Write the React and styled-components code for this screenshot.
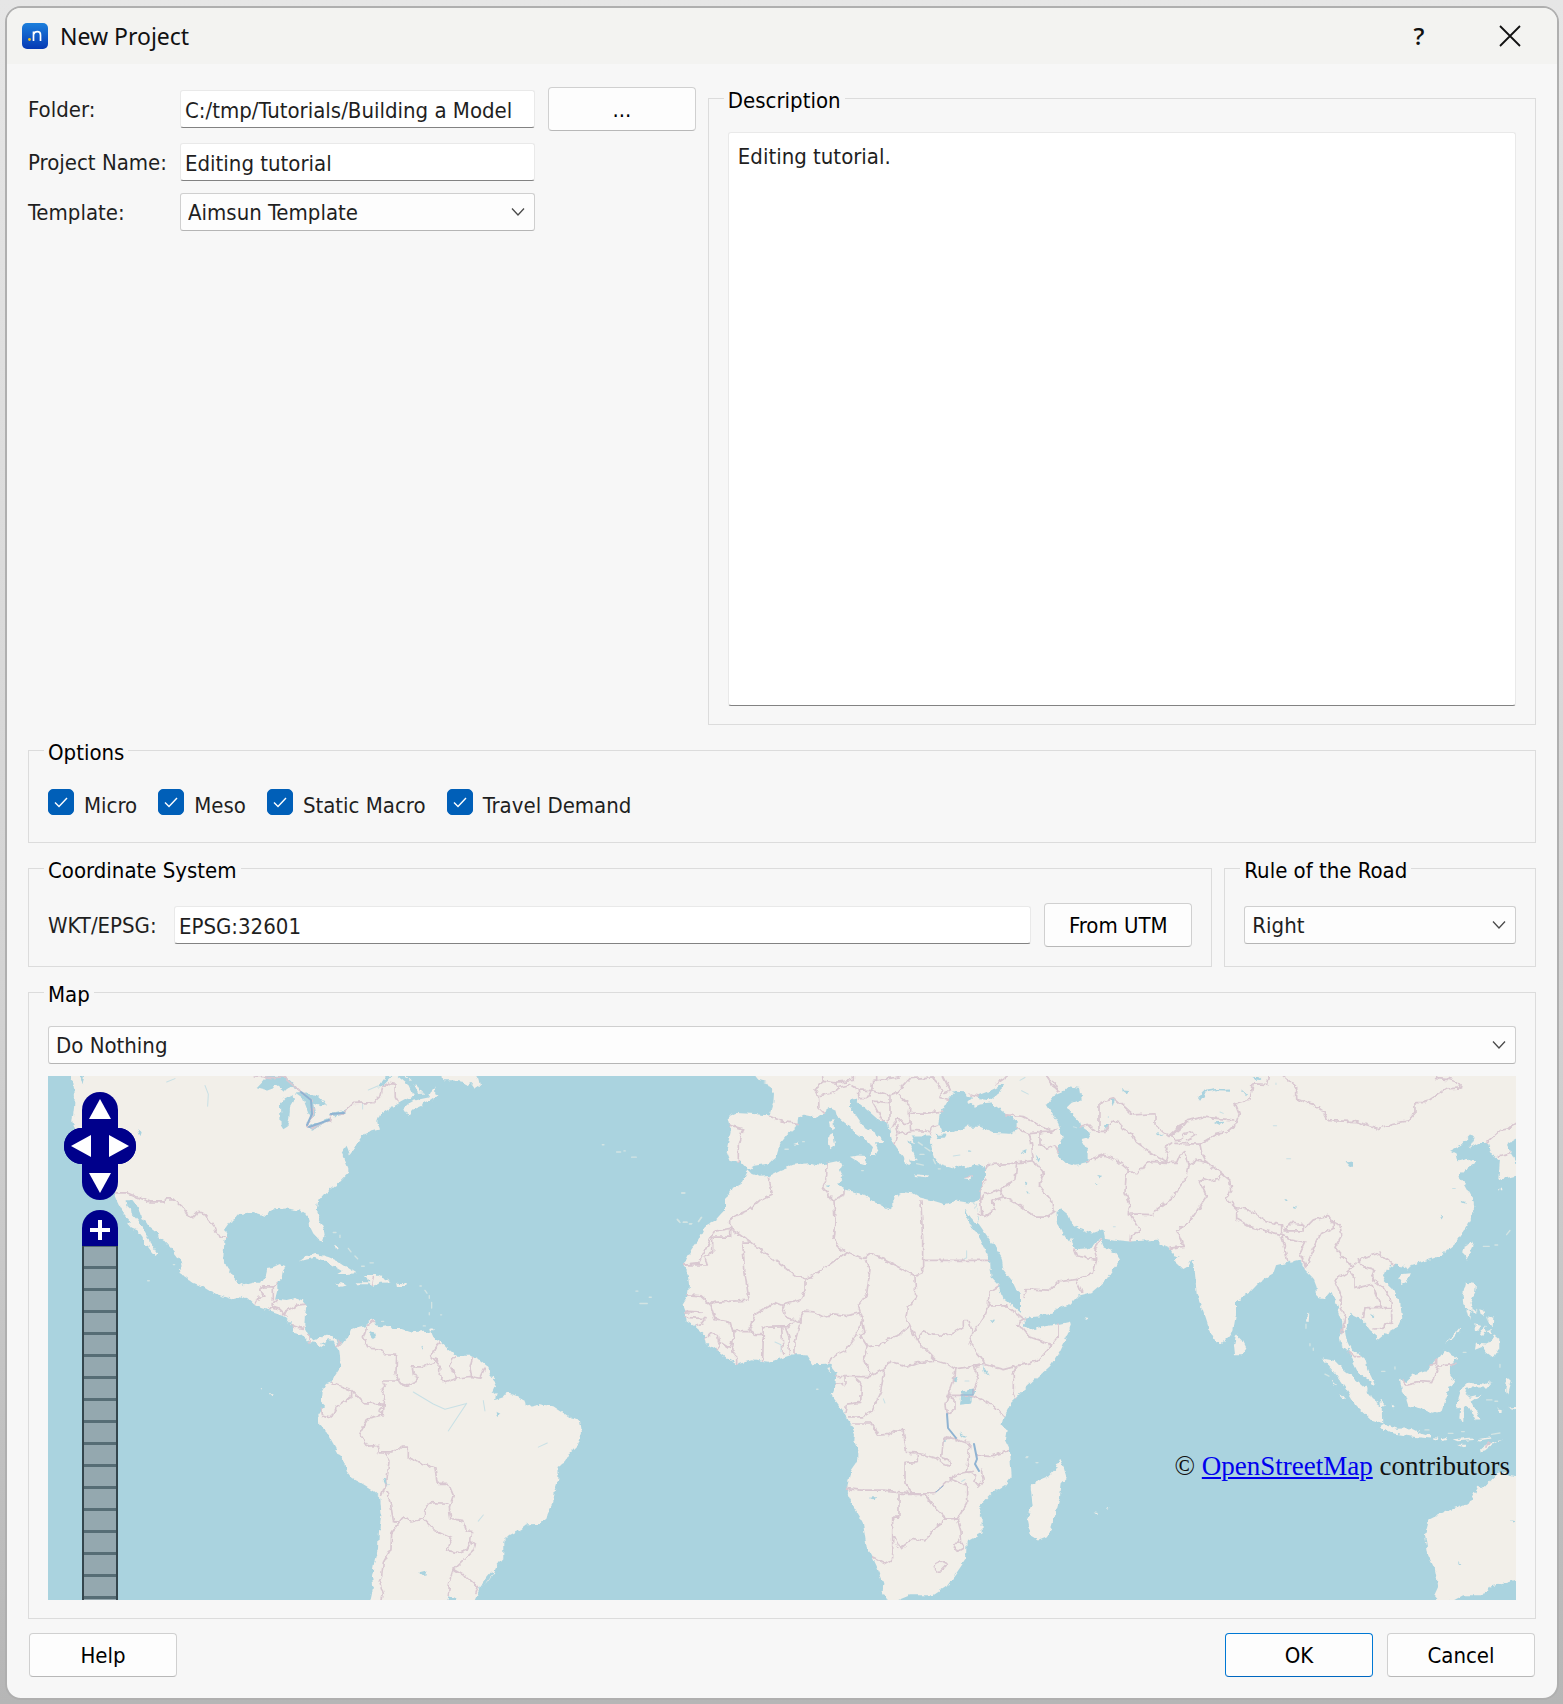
import React from "react";
import styled, { createGlobalStyle, css } from "styled-components";

const GlobalStyle = createGlobalStyle`
  * { box-sizing: border-box; }
  body {
    margin: 0;
    background: linear-gradient(#e6e6e6, #d2d2d2 60%, #b6b6b6);
    color: #1f1f1f;
    font-family: "DejaVu Sans Condensed", "Noto Sans", sans-serif;
    font-size: 22px;
    line-height: 28px;
  }
  button, input, select, textarea { font: inherit; color: inherit; margin: 0; }
`;

const Page = styled.div`
  min-height: 100vh;
  display: flex;
  padding: 6px 4px 4px 5px;
`;

const Dialog = styled.form`
  flex: 1;
  display: flex;
  flex-direction: column;
  background: #f7f7f7;
  border: 2px solid #afafaf;
  border-radius: 16px;
  overflow: hidden;
`;

const TitleBar = styled.header`
  display: flex;
  align-items: center;
  height: 56px;
  padding: 0 12px 0 15px;
  background: #f3f3f1;
`;

const Title = styled.h1`
  flex: 1;
  margin: 0 0 0 12px;
  color: #111;
  font: 23px/32px "Noto Sans", "Open Sans", sans-serif;
`;

const TitleButton = styled.button`
  display: grid;
  place-items: center;
  width: 70px;
  height: 46px;
  margin-left: 21px;
  padding: 0;
  border: 0;
  background: none;
  color: #111;
  font: 600 24px/32px "Open Sans", sans-serif;
`;

const Body = styled.div`
  display: flex;
  flex-direction: column;
  gap: 10px;
  padding: 19px 21px 21px;
`;

const Split = styled.div`
  display: grid;
  grid-template-columns: ${(p) => p.$columns};
  column-gap: 12px;
`;

const FormGrid = styled.div`
  display: grid;
  grid-template-columns: 152px minmax(0, 1fr) 161px;
  grid-auto-rows: min-content;
  row-gap: 12px;
  align-items: center;
  padding-top: 4px;
`;

const FieldLabel = styled.label`
  padding-top: 2px;
`;

const BrowseCell = styled.div`
  padding-left: 13px;
  display: grid;
`;

const RowBreak = styled.span`
  grid-column: 3;
`;

const Group = styled.fieldset`
  min-width: 0;
  margin: 0;
  padding: 18px 19px;
  border: 1px solid #dcdcdc;
`;

const Legend = styled.legend`
  margin-left: -4px;
  padding: 5px 4px 0;
  color: #000;
  line-height: 26px;
`;

const fieldFrame = css`
  width: 100%;
  height: 38px;
  border: 1px solid #e9e9e9;
  border-bottom-color: #828282;
  border-radius: 3px;
  background: #fff;
  outline: none;
`;

const TextField = styled.input`
  ${fieldFrame}
  min-width: 0;
  padding: 2px 4px 0;
`;

const TextArea = styled.textarea`
  ${fieldFrame}
  display: block;
  height: 574px;
  padding: 10px 9px;
  resize: none;
`;

const SelectWrap = styled.div`
  position: relative;
  min-width: 0;
`;

const SelectBox = styled.select`
  display: block;
  width: 100%;
  height: 38px;
  padding: 2px 40px 0 7px;
  appearance: none;
  border: 1px solid #cfcfcf;
  border-bottom-color: #b5b5b5;
  border-radius: 3px;
  background: #fdfdfd;
`;

const Chevron = styled.svg`
  position: absolute;
  right: 10px;
  top: 14px;
  pointer-events: none;
`;

const Button = styled.button`
  width: 148px;
  height: 44px;
  padding: 2px 0 0;
  border: 1px solid ${(p) => (p.$primary ? "#0078d4" : "#d0d0d0")};
  border-bottom-color: ${(p) => (p.$primary ? "#0067c0" : "#b8b8b8")};
  border-radius: 4px;
  background: #fdfdfd;
  color: #000;
`;

const Options = styled.div`
  display: flex;
  gap: 21px;
  padding: 5px 0 4px;
`;

const Option = styled.label`
  position: relative;
  display: flex;
  align-items: flex-start;
  gap: 10px;
`;

const Check = styled.input`
  appearance: none;
  width: 26px;
  height: 26px;
  border: 1px solid #005fb8;
  border-radius: 5px;
  background: #fff;
  &:checked { background: #005fb8; }
`;

const Tick = styled.svg`
  position: absolute;
  left: 0;
  top: 0;
  pointer-events: none;
`;

const OptionText = styled.span`
  padding-top: 3px;
`;

const FieldRow = styled.div`
  display: grid;
  grid-template-columns: 113px minmax(0, 1fr) auto;
  column-gap: 13px;
  align-items: center;
  padding: 1px 0;
`;

const RuleRow = styled.div`
  padding: 4px 0;
`;

const MapStack = styled.div`
  display: grid;
  gap: 12px;
`;

const MapView = styled.div`
  position: relative;
  overflow: hidden;
  background: #aad3df;
`;

const MapSvg = styled.svg`
  display: block;
  width: 100%;
  height: auto;
`;

const MapControls = styled.div`
  position: absolute;
  left: 16px;
  top: 16px;
  bottom: 0;
  width: 72px;
  display: flex;
  flex-direction: column;
  align-items: center;
`;

const PanRow = styled.div`
  display: flex;
  background: #00008b;
  border-radius: 18px;
`;

const MapButton = styled.button`
  flex: none;
  display: grid;
  place-items: center;
  width: 36px;
  height: 36px;
  padding: 0;
  border: 0;
  background: #00008b;
  border-radius: ${(p) => p.$radius};
  margin-top: ${(p) => (p.$spaced ? "10px" : "0")};
`;

const ZoomTrack = styled.input`
  flex: 1;
  min-height: 0;
  width: 36px;
  margin: 0;
  appearance: none;
  writing-mode: vertical-lr;
  border: solid #34464d;
  border-width: 0 2px;
  background: linear-gradient(#94a8af 19px, #566d75 19px) 0 1px / 100% 22px;
  &::-webkit-slider-thumb { appearance: none; width: 1px; height: 1px; }
`;

const Attribution = styled.div`
  position: absolute;
  right: 6px;
  bottom: 118px;
  color: #111;
  font: 27px/32px "Liberation Serif", serif;
`;

const MapLink = styled.a`
  color: #0000ee;
  text-decoration: underline;
`;

const Footer = styled.footer`
  display: flex;
  justify-content: space-between;
  padding: 4px 1px 0;
`;

const FooterGroup = styled.div`
  display: flex;
  gap: 14px;
`;

const AMERICAS_LAND = `M92,17 100,40 105,75 102,110 97,150 102,165 120,190 130,250 135,300 160,345 210,350 222,352 225,368 235,390 250,415 262,428 268,436 262,446 275,460 295,468 308,485 310,503 325,515 335,528 347,540 353,532 345,520 335,512 330,492 318,478 308,460 300,445 285,428 272,415 270,402 262,395 260,378 278,378 290,395 300,415 305,432 320,440 330,455 353,472 357,488 375,498 395,520 412,540 420,552 425,570 420,580 422,592 440,603 460,618 490,630 515,645 550,658 575,666 590,662 605,657 625,665 645,683 665,692 690,698 710,705 730,712 745,728 757,742 758,762 780,768 800,783 805,790 825,792 835,800 848,808 852,795 842,793 865,782 880,783 885,795 890,805 898,815 900,830 902,860 885,885 875,905 858,912 845,935 842,965 855,978 845,985 835,1000 838,1030 860,1050 880,1085 900,1120 917,1145 920,1165 935,1185 965,1200 1000,1220 1020,1238 1025,1290 1017,1340 1014,1390 1003,1430 996,1470 1000,1500 990,1545 1302,1545 1320,1505 1340,1490 1360,1465 1370,1440 1390,1418 1390,1370 1410,1350 1445,1333 1462,1319 1500,1318 1520,1305 1524,1285 1540,1255 1545,1220 1555,1190 1556,1150 1575,1135 1590,1110 1615,1085 1626,1055 1620,1018 1595,1012 1570,995 1540,976 1495,970 1460,977 1458,960 1430,945 1400,938 1390,950 1365,958 1370,935 1355,940 1370,908 1350,885 1345,862 1320,842 1290,830 1250,830 1225,810 1200,790 1185,780 1180,768 1155,757 1115,762 1085,752 1060,752 1050,740 1015,745 1005,740 1002,725 990,730 980,740 950,748 932,755 925,775 910,790 902,800 895,800 888,780 865,770 840,778 820,785 805,768 795,750 793,740 795,710 800,685 785,668 765,662 740,668 715,665 705,668 712,640 712,615 725,605 728,585 738,570 720,563 700,572 680,575 675,595 660,618 640,618 612,625 590,615 575,590 555,565 550,545 553,500 560,480 555,460 570,440 590,430 600,418 640,412 680,424 690,405 740,402 780,408 800,420 808,435 810,455 820,475 835,490 848,498 854,480 850,455 838,430 830,405 835,380 850,362 880,340 900,325 925,300 925,285 915,262 905,240 920,220 930,245 942,230 955,205 965,190 990,180 1020,172 1012,150 1020,130 1050,112 1080,95 1105,82 1122,78 1115,60 1105,40 1112,30 1090,10 92,10Z
M1090,112 1102,130 1122,110 1170,90 1197,72 1185,65 1190,48 1172,65 1165,80 1140,85 1120,90 1105,98Z
M1207,10 1210,30 1235,30 1272,35 1280,45 1292,38 1305,55 1320,45 1315,25 1295,10Z
M1120,40 1135,70 1155,68 1140,62 1128,40Z
M778,556 800,540 830,534 865,543 890,553 920,572 950,590 920,592 895,592 908,585 885,572 860,556 825,545 800,550Z
M968,595 1010,595 1030,603 1052,617 1020,618 1000,630 985,622 950,622 955,616 988,616 985,606Z
M1072,618 1098,620 1096,627 1074,627Z M886,619 905,619 917,626 900,630Z
M882,502 892,510 897,523 888,520Z M1168,752 1181,750 1180,758 1170,760Z
M655,925 666,924 664,928Z M690,940 698,942 694,948Z`;

const AMERICAS_SPECKS = `M880,472h8M900,480v6M925,518l8,10M945,540l8,8M965,570h8M990,560h10M1140,627h4M1155,640l6,8M1168,655v8M1175,675v16M1168,705v6M1202,711h3M1150,743h6M1025,730h6M1687,217h5M1730,238h12M1752,235h4M1775,253h14M1925,357h8M1912,433l6,6M1930,442h10M1950,446h6M1976,440l8,-12M1788,642h6M1828,660h6M1800,678h22M400,565h4M323,612h5`;

const AMERICAS_BORDERS = `M640,17 700,22 730,20 760,45 812,85 818,130 800,163 815,168 868,148 875,130 910,125 940,97 1000,95 1022,75 1030,45 1045,38 1065,42 1066,80 1074,93
M228,357 262,357 290,368 330,383 372,383 375,374 402,374 425,395 440,418 458,427 472,413 490,414 520,450 530,475 548,485 562,485
M645,680 655,660 675,657 660,640 668,630 700,630 700,675 690,695M712,618 700,630M697,682 712,668M695,688 720,695 738,712M728,708 770,683 800,680M757,743 790,750M807,768 807,790M895,785 900,798 888,805
M1000,730 980,745 970,775 985,808 1020,810 1035,827 1070,828 1068,880 1078,910 1100,915 1125,905 1137,890 1120,885 1117,862 1145,862 1190,848 1172,828 1185,810 1198,792
M1076,903 1028,903 1035,918 1023,930 1035,945 1030,998 1018,988 1028,970 970,966 935,930 875,908M935,930 935,948 890,980 875,1007 848,1003 845,985
M1030,1000 985,1010 958,1055 985,1092 1015,1090 1018,1112 1055,1112 1085,1095 1105,1095 1105,1125 1140,1140 1185,1155 1192,1200 1225,1200 1240,1235 1228,1270 1232,1303 1268,1308 1280,1338 1295,1340 1292,1368 1306,1378 1302,1392 1240,1450 1230,1480 1225,1525
M1190,848 1200,860 1198,885 1215,908 1250,895 1290,890 1320,895 1337,860M1250,895 1230,860 1245,832M1295,890 1290,865 1298,835
M1035,1112 1047,1135 1040,1200 1025,1235M1040,1225 1052,1260 1060,1310 1075,1315 1055,1345 1053,1390 1030,1430 1025,1470 1018,1485 1030,1520 1025,1545M1075,1315 1090,1298 1115,1312 1150,1303 1158,1265 1170,1256 1225,1258M1150,1303 1185,1338 1235,1360 1220,1395 1260,1402 1280,1395 1292,1370M1240,1450 1280,1472 1312,1500 1305,1520M1000,600 995,625`;

const AMERICAS_WATER = `M650,50 665,35 680,17 720,17 750,30 778,58 750,50 735,60 715,45 680,57Z M720,100 735,82 760,70 765,85 750,110 748,140 742,165 730,172 722,160Z M765,68 800,65 830,72 845,85 858,102 845,105 830,98 820,95 825,130 812,140 800,110 790,85Z M798,165 830,155 870,140 868,150 815,174Z M868,130 885,122 920,114 912,130 885,134Z M290,172 308,180 305,192 296,188Z M992,755 1004,760 1008,775 998,782 990,768Z M1028,1187 1040,1190 1046,1205 1038,1208Z M1138,1458 1160,1453 1160,1465 1148,1466Z M1366,992 1378,998 1376,1008Z M1143,800 1152,802 1148,812Z M1312,1510 1330,1485 1355,1456 1360,1462 1335,1495Z M120,17 132,17 128,45Z M1015,50 1040,17 1055,17 1020,52Z M1075,17 1110,45 1118,38 1090,17Z M1225,1528 1250,1534 1240,1545 1222,1545Z`;

const AMERICAS_RIVERS = `M1120,935 1180,970 1215,985 1280,968M1280,968 1225,1048M1330,960 1335,990M495,45 505,70 503,105M1315,1310 1330,1292M1495,1095 1522,1083M968,95v18M985,58l30,-12M380,35l25,-10`;

const WEST_LAND = `M235,292 245,302 270,310 295,308 330,290 370,275 420,270 450,275 500,265 518,275 510,290 520,310 502,330 525,348 550,353 590,365 600,380 630,390 658,404 670,395 670,370 700,355 730,358 750,370 790,380 825,390 860,380 915,388 926,425 920,448 900,425 885,402 890,425 905,455 930,490 945,520 960,555 965,605 985,625 1000,665 1035,690 1065,715 1068,728 1060,740 1080,755 1120,745 1165,738 1200,731 1203,740 1190,775 1170,815 1140,860 1100,895 1050,940 1020,970 1000,1010 995,1030 1010,1050 1005,1075 1020,1105 1025,1180 1005,1205 970,1225 925,1270 935,1300 935,1345 890,1370 888,1420 860,1460 830,1500 790,1525 720,1525 670,1545 650,1535 638,1515 640,1490 620,1440 605,1410 590,1385 578,1310 550,1265 530,1225 540,1165 565,1130 565,1105 553,1080 555,1055 540,1025 520,990 485,945 495,920 500,880 480,855 432,857 410,825 370,825 295,850 245,843 200,855 175,840 150,820 110,795 105,770 75,745 50,730 45,705 37,683 52,660 57,625 52,585 40,568 65,520 85,495 100,465 110,450 140,435 165,408 165,375 180,350 215,330 230,300Z
M250,10 265,28 290,35 312,68 310,95 298,132 250,128 200,125 175,135 180,155 182,180 170,235 182,265 210,265 235,290 255,278 295,272 325,245 330,215 350,190 380,165 385,140 400,130 440,138 480,110 500,120 505,140 530,160 560,185 590,205 610,225 600,250 615,250 625,232 615,210 645,210 625,190 580,165 555,130 540,110 540,90 560,80 565,95 590,115 620,140 655,160 665,200 680,225 700,250 705,272 720,280 718,260 740,262 730,240 715,205 735,215 725,190 760,190 780,190 785,225 795,255 810,275 845,285 870,275 890,285 915,275 945,280 945,310 935,345 925,375 912,385 926,425 922,430 925,445 950,480 975,515 995,545 1000,580 1025,610 1040,640 1060,655 1065,690 1080,718 1110,715 1160,700 1160,10Z
M475,190 490,182 495,220 480,230 474,215Z M480,150 490,145 492,170 484,175Z M540,252 565,248 590,250 586,275 570,270Z M733,303 778,306 775,312 735,308Z M882,315 895,308 912,307 900,317Z M370,215 388,210 385,218Z
M1170,1130 1180,1150 1190,1185 1175,1200 1170,1240 1150,1310 1135,1355 1105,1367 1080,1352 1070,1305 1088,1265 1082,1210 1100,1195 1135,1180 1155,1160Z M472,868 480,866 479,878Z`;

const WEST_WATER = `M805,155 810,125 835,85 855,60 885,62 890,75 910,78 895,92 915,107 930,100 965,97 1000,120 1040,150 1040,178 1020,185 975,183 930,165 890,165 850,180 815,180Z M920,75 960,60 1000,42 985,70 960,88 930,85Z M796,188 830,187 825,196 800,198Z M875,935 905,925 922,935 905,950 905,968 870,972Z M850,895 862,888 862,900 852,910Z M600,1242 618,1240 614,1249 602,1248Z M940,852 948,875 957,888 945,880Z M1052,235 1070,230 1068,242Z M960,726 972,728 968,735Z M866,1052 888,1065 882,1068Z M465,333 480,332 478,338Z M1062,325 1072,330 1070,338Z M1068,352 1078,354 1074,360Z M1097,245 1110,260 1105,268Z M893,232 905,235 900,238Z M820,1070 828,1074 820,1085Z`;

const WEST_RIVERS = `M890,525v20l-20,10M315,790l18,8v20M640,955l5,12M850,250l20,-3M1050,30l15,-8M1055,60l20,10M885,903h12M875,1195l10,-6`;
const WEST_SPECKS = `M345,230h10M398,208h5M745,210l12,8M765,225l15,10M750,245h12M790,260l6,12M805,287h6M740,272l20,4M22,435l8,8M40,442h12M58,447h6M85,440l10,-12M36,357h9M440,927h4M1070,1123h4M1100,1140h4M575,292h5`;

const WEST_BORDERS = `M182,460 182,430 235,408 270,378 308,360 295,312M182,460 135,468 125,485 182,485 182,460M125,485 85,562 40,567M128,485 128,530 105,540 112,566 40,566M182,460 245,503 380,600 400,605 425,600 530,530M245,503 218,503 225,590 237,668 130,675 122,683 90,655 50,653M405,605 405,640 390,668 335,683 315,675 255,710 238,757 188,757 180,730 135,722 122,683M471,270 470,310 457,340 490,378 525,360 525,348M492,378 495,440 490,485 505,512 530,530 575,548 600,530 735,597 758,588 758,490 753,380M758,553 960,553
M735,597 737,665 712,690 708,720 720,745 740,785 800,845M583,540 600,580 590,650 565,685 575,715 585,765 570,768 592,803 625,800 655,780 690,768 717,745M335,683 350,720 370,725 390,735 392,710 405,700 430,702 460,717 490,708 530,713 570,705M580,725 555,775 525,815 485,835 475,852M592,803 580,840 603,890 497,890M603,890 645,865 660,845 710,860 740,850 800,845 835,855 855,868M642,870 632,935 605,990 575,1010 540,1010M555,893 575,910 572,965 530,970 525,992M497,912 525,910 525,893M545,1025 605,1025 625,1060 655,1058 675,1045 700,1048 710,1110 742,1112 742,1140 705,1142 705,1200 725,1225M742,1112 800,1128 820,1145 838,1150 835,1130 815,1125 820,1075 835,1065 890,1083 900,1085 890,1165M530,1215 570,1220 640,1220 725,1228 795,1227 840,1188 865,1172 910,1165
M687,1232 765,1232 790,1265 830,1303M687,1232 687,1298 668,1298 668,1420 645,1432 610,1415M670,1350 690,1390 730,1360 765,1367 800,1325 830,1303 862,1303 890,1260 890,1205 840,1188M862,1303 873,1340 875,1375M855,1378 865,1366 878,1380 880,1388 862,1398 853,1388ZM790,1445 795,1433 812,1425 832,1435 808,1460 795,1455ZM740,785 760,757 790,770 825,770 850,765 880,745 880,728 897,728 908,765 900,795 935,835 945,855 1000,870 1040,860 1100,845 1145,798M908,765 945,710 955,685 957,645 985,628M955,685 1010,685 1045,710 1065,725 1040,740 1060,750 1080,775 1145,798 1167,770 1167,738M1040,860 1030,880 1030,940 1040,955M945,855 912,860 925,895 910,930 910,945 970,975 1000,1005M855,868 912,860M855,868 850,905 835,945 910,945M835,945 825,970 830,1000 855,985 855,955 835,950M860,1070 820,1070M920,1120 960,1122 1018,1105M890,1165 920,1180 915,1195 928,1210 940,1190 935,1165
M75,742 95,735 105,722 45,718M45,700 95,703 45,706M105,780 120,765 145,768 150,795 138,812M150,790 178,808 190,780 188,757M190,790 185,815 200,830 200,853M238,757 255,768 280,768 278,845M280,768 278,747 355,745M335,747 340,825M345,745 357,775 358,825M355,745 370,735M390,735 375,790 375,825
M945,290 955,275 1020,272 1090,263M1040,272 1035,320 990,348 945,362 930,380M950,320 930,350 935,420M990,348 1000,368 965,380 975,405 945,425 928,422M1000,368 1050,395 1095,427 1130,427 1155,410M1090,263 1120,300 1108,335 1145,380 1150,410M1090,263 1085,215 1078,185 1040,170M1010,130 1060,135 1120,165 1145,180M1078,185 1110,182 1110,215 1130,230 1155,220 1165,240M1110,182 1145,180 1160,170
M180,160 218,170 205,215 205,265M300,135 340,150 382,155M445,70 447,110 460,122M435,55 460,33 500,38 505,55 480,68 447,75ZM500,35 550,30 550,17M460,33 458,17M510,50 540,42 565,58 605,60 608,30 690,20M565,60 568,83 590,83 605,60 660,75 680,68 720,25 790,20 815,60 810,80 835,85M820,17 842,60 825,65M660,75 660,95 605,90 640,150M620,17 620,30M660,95 660,140 650,155M680,68 720,105 718,125 770,125 815,120M718,125 722,175 780,178 785,165 803,160M722,155 700,155 685,140 672,155 665,165M680,160 685,185 675,215M685,185 722,180M780,178 785,190M980,40 1010,20M1130,17 1160,60M900,70 925,75M885,312 910,308`;

const EAST_LAND = `M50,10 50,300 0,300 0,718 25,718 90,700 150,680 175,655 215,645 240,625 265,605 270,590 300,550 285,530 250,515 240,485 230,500 220,512 200,518 165,520 158,505 154,485 146,500 110,445 100,425 105,410 125,405 145,420 155,445 175,460 215,475 250,463 255,488 300,495 330,498 410,493 430,512 450,520 460,540 480,545 460,550 490,578 505,570 518,550 525,590 530,650 550,700 565,745 585,785 603,795 625,775 640,755 648,710 648,670 690,645 720,615 760,590 768,568 800,560 840,550 855,580 880,605 890,630 890,662 915,665 935,642 950,680 965,720 970,760 957,775 960,795 985,815 1000,850 1015,880 1040,895 1065,917 1055,890 1045,870 1042,845 1020,825 995,815 980,785 975,755 985,735 988,705 1015,718 1035,735 1050,755 1070,770 1072,787 1100,765 1135,745 1147,720 1140,670 1115,635 1088,610 1100,580 1120,565 1150,568 1160,582 1170,568 1215,555 1260,540 1300,510 1325,475 1350,440 1365,405 1358,370 1335,330 1315,310 1340,285 1370,265 1345,258 1315,265 1310,245 1290,235 1320,220 1350,190 1365,195 1350,225 1375,212 1405,212 1415,245 1440,262 1435,320 1495,305 1488,265 1470,235 1460,215 1495,195 1495,10Z
M648,768 665,785 678,810 665,828 645,828 642,800Z M1135,605 1150,592 1173,590 1160,615 1145,622Z M1335,510 1355,498 1361,510 1340,553 1330,535Z
M1338,618 1368,622 1365,650 1352,672 1355,695 1375,705 1365,708 1345,690 1330,680 1328,655Z M1342,695 1355,703 1350,724Z M1378,695 1390,698 1395,715 1382,708Z M1405,712 1420,720 1418,745 1408,735Z M1363,735 1380,740 1378,757 1365,755Z M1395,745 1400,755 1390,775 1380,768Z M1400,755 1415,752 1415,770Z M1365,812 1368,795 1400,797 1415,788 1422,768 1438,780 1438,808 1420,835 1400,820 1390,803Z M1278,795 1300,770 1322,745 1318,758 1298,780Z
M1140,900 1160,905 1180,885 1220,872 1245,850 1275,815 1312,838 1290,860 1290,885 1308,912 1285,920 1280,950 1265,990 1240,998 1200,982 1165,975 1155,945 1145,930Z
M905,838 945,845 975,875 1010,900 1045,930 1055,955 1085,975 1087,1028 1060,1020 1010,975 975,920 945,880Z M1080,1035 1090,1028 1130,1042 1175,1040 1195,1050 1230,1060 1232,1070 1180,1065 1120,1055Z M1238,1066 1255,1068 1250,1074Z M1260,1070 1280,1066 1285,1074 1265,1078Z M1295,1072 1350,1068 1362,1074 1310,1078Z M1375,1072 1410,1066 1415,1070 1380,1076Z M1380,1107 1395,1088 1450,1072 1420,1085 1395,1105Z M1312,1088 1335,1088 1340,1098Z
M1325,925 1345,908 1400,914 1415,902 1400,922 1340,922 1335,940 1350,952 1385,943 1355,963 1382,1018 1368,1018 1345,975 1332,978 1330,1020 1318,1015 1320,985 1308,975Z M1462,892 1475,905 1465,940 1455,930Z M1432,983 1450,985 1440,992Z M1465,980 1495,978 1495,988Z M1078,955 1098,975 1085,978Z M1115,972 1128,975 1120,982Z M935,900 952,915 940,912Z M962,940 975,955 965,955Z M978,962 996,982Z M192,718 208,720 198,726Z M862,705 868,708 866,732 858,730Z M1435,345h12v4h-12Z
M1495,1180 1465,1175 1440,1165 1410,1195 1390,1215 1375,1210 1350,1255 1280,1280 1228,1305 1215,1350 1225,1410 1245,1450 1255,1500 1243,1525 1260,1545 1300,1540 1330,1525 1390,1525 1410,1500 1450,1492 1495,1478Z M221,1285 234,1286 230,1291Z M260,1270 269,1268 266,1277Z`;

const EAST_WATER = `M80,100 100,75 125,65 145,47 180,52 185,85 155,95 142,107 155,125 180,150 185,165 213,183 205,195 185,200 203,230 203,270 165,278 135,268 113,250 115,220 128,195 115,155 95,125Z M533,80 550,60 590,55 632,54 630,60 590,59 555,65 542,92Z M272,85 285,85 278,105Z M302,56 328,58 320,68Z M582,152 612,150 600,160Z M980,268 995,266 1000,278 988,278Z M228,305 246,307 240,315Z M225,328 235,328 230,335Z M252,160 268,160 258,172Z M697,20 715,20 725,30 712,28Z M662,55 682,72 678,76Z M793,372 804,374 799,380Z M820,395 832,393 826,401Z M1258,420 1270,425 1265,434Z M1325,380 1338,384 1330,390Z M1470,1307 1485,1310 1478,1314Z M1314,1430 1324,1432 1318,1440Z M410,184 430,186 415,190Z M1050,708 1063,715 1058,720Z`;

const EAST_RIVERS = `M160,165l10,3M800,258h12M760,162h10M600,122l10,4M280,455h6M768,38v4M265,135v3M1298,344h8`;
const EAST_SPECKS = `M858,738v12M870,795v6M880,808v6M915,883l12,6M1125,862v6M1085,875h10M1400,958h16M1425,962h8M1440,855v8M1460,925v12M1400,718l5,10M1370,695v8M1330,820h8M1390,512h18M1425,508h8M1460,478l10,-12M1215,1045h12M1285,1055h14M1325,1050h8M1415,1058l25,-4M48,1140h4M18,1125h4`;

const EAST_BORDERS = `M75,17 105,40 117,62M237,175 237,95 285,82 340,130 405,127 405,160 445,192 470,170 490,160 500,147 550,137 640,145 650,155M180,165 205,158 225,178 255,178 280,148 305,155 305,170 335,185 350,210 415,255 440,265M200,265 250,247 290,262 325,290 350,305 365,290 385,265 440,268 470,268 480,245 495,240 505,280M650,155 620,180 585,188 540,215 465,213M490,160 455,190 465,205 485,203 490,185 520,178 525,190 500,205M455,212 435,225 445,240 440,265M540,215 545,240 560,268 530,262 508,275 500,310 475,345 460,370 410,405 400,420 325,418 330,390 315,355 318,310 325,290M325,415 360,465 335,480 333,497M560,268 605,300 595,318 570,322 550,315 540,322 560,365 510,440 470,465 490,512 450,517M605,300 630,320 632,355 620,372 650,400 680,403 740,440 785,450M650,405 650,432 690,455 730,465 785,478 785,450M795,465 815,445 848,448 850,467 795,467M850,465 880,435 925,425 935,440 960,450 965,480 945,515 975,550 1000,570 1030,545 1078,532 1100,550 1120,565M785,478 795,520 803,555M785,478 815,492 855,500 840,530 857,575 880,520 900,480 940,460 940,440M1000,570 975,592 945,610 965,660 960,685 975,720 965,765M990,585 1005,605 1005,635 1055,622 1085,690 1035,690 1030,725M1085,690 1115,690 1115,735 1090,738 1090,750 1062,752M1015,548 1025,570 1065,580 1055,605 1090,630 1110,660 1115,690M985,820 1005,832 1020,832M745,17 740,42 700,40 690,85 645,97 658,130 650,155M790,17 830,50 830,85 880,100 910,120 925,147 1010,150 1075,170 1120,155 1165,148 1185,125 1185,95 1215,95 1280,55 1325,52 1310,35 1290,28 1250,25 1250,17M1400,210 1440,175 1465,170 1488,152M1435,250 1470,240M1150,900 1160,915 1205,905 1235,908 1255,860 1305,855M1232,857 1250,855 1250,842M10,660 20,635 90,640 115,615 170,608 220,590 230,550 170,540 162,520M170,608 185,645M230,550 225,525 240,490M1395,1095 1410,1080`;

const REGIONS = [
  { x: -8, land: AMERICAS_LAND, water: AMERICAS_WATER, rivers: AMERICAS_RIVERS, specks: AMERICAS_SPECKS, borders: AMERICAS_BORDERS },
  { x: 622, land: WEST_LAND },
  { x: 972, land: EAST_LAND, water: EAST_WATER, rivers: EAST_RIVERS, specks: EAST_SPECKS, borders: EAST_BORDERS },
  { x: 622, water: WEST_WATER, rivers: WEST_RIVERS, specks: WEST_SPECKS, borders: WEST_BORDERS },
];

function WorldMap() {
  return (
    <MapSvg viewBox="0 0 1468 524" role="img" aria-label="World map">
      <defs>
        <filter id="coast" x="0" y="0" width="100%" height="100%">
          <feTurbulence type="fractalNoise" baseFrequency="0.06" numOctaves="2" seed="4" />
          <feDisplacementMap in="SourceGraphic" scale="16" xChannelSelector="R" yChannelSelector="G" />
        </filter>
      </defs>
      <rect width="1468" height="524" fill="#aad3df" />
      {REGIONS.map((r, i) => (
        <g key={i} transform={`translate(${r.x} -6) scale(0.3333 0.3444)`} strokeLinejoin="round" strokeLinecap="round">
          <g filter="url(#coast)">
            {r.land && <path d={r.land} fill="#f2efe9" />}
            {r.water && <path d={r.water} fill="#aad3df" />}
          </g>
          {r.rivers && <path d={r.rivers} fill="none" stroke="#c8e0e5" strokeWidth="3" />}
          {r.specks && <path d={r.specks} fill="none" stroke="#d3e4e3" strokeWidth="4" />}
          {r.borders && (
            <path d={r.borders} filter="url(#coast)" fill="none" stroke="#d9c8d1" strokeWidth="5" />
          )}
        </g>
      ))}
      <g fill="none" stroke="#8fb3d2" strokeWidth="2" strokeLinecap="round" strokeLinejoin="round">
        <path d="M899,338 900,352 908,362M926,368 929,383 927,388 931,395M253,16 263,24 264,38 259,49M261,51 281,44M283,38 296,37" />
        <path d="M913,319H925V313M888,416 895,410" strokeWidth="1" />
      </g>
    </MapSvg>
  );
}

function Select({ id, label, children }) {
  return (
    <SelectWrap>
      <SelectBox id={id} aria-label={label}>
        <option>{children}</option>
      </SelectBox>
      <Chevron width="14" height="10" viewBox="0 0 14 10" fill="none" stroke="#4a4a4a" strokeWidth="1.3">
        <path d="M1 1.5 7 8 13 1.5" />
      </Chevron>
    </SelectWrap>
  );
}

function Arrow({ d }) {
  return (
    <svg width="36" height="36" viewBox="0 0 36 36" fill="#fff">
      <path d={d} />
    </svg>
  );
}

export default function App() {
  return (
    <Page>
      <GlobalStyle />
      <Dialog onSubmit={(e) => e.preventDefault()}>
        <TitleBar>
          <svg width="26" height="26" viewBox="0 0 26 26" aria-hidden="true">
            <defs>
              <linearGradient id="logo" x2="0" y2="1">
                <stop stopColor="#1c7fdc" />
                <stop offset="1" stopColor="#0639b4" />
              </linearGradient>
            </defs>
            <rect width="26" height="26" rx="5" fill="url(#logo)" />
            <circle cx="7.5" cy="16.5" r="1.4" fill="#f5c21b" />
            <path d="M11.5 18V8.500M11.5 11.5Q12.5 8.700 15.3 8.700 18.5 8.700 18.5 12V18" fill="none" stroke="#fff" strokeWidth="1.7" />
          </svg>
          <Title>New Project</Title>
          <TitleButton type="button" aria-label="What's this">?</TitleButton>
          <TitleButton type="button" aria-label="Close">
            <svg width="22" height="22" viewBox="0 0 22 22" stroke="#111" strokeWidth="1.8">
              <path d="M1 1 21 21M21 1 1 21" />
            </svg>
          </TitleButton>
        </TitleBar>

        <Body>
          <Split $columns="minmax(0, 25fr) minmax(0, 31fr)">
            <FormGrid>
              <FieldLabel htmlFor="folder">Folder:</FieldLabel>
              <TextField id="folder" defaultValue="C:/tmp/Tutorials/Building a Model" />
              <BrowseCell>
                <Button type="button" aria-label="Browse">...</Button>
              </BrowseCell>
              <FieldLabel htmlFor="name">Project Name:</FieldLabel>
              <TextField id="name" defaultValue="Editing tutorial" />
              <RowBreak />
              <FieldLabel htmlFor="template">Template:</FieldLabel>
              <Select id="template">Aimsun Template</Select>
            </FormGrid>
            <Group>
              <Legend>Description</Legend>
              <TextArea aria-label="Description" defaultValue="Editing tutorial." />
            </Group>
          </Split>

          <Group>
            <Legend>Options</Legend>
            <Options>
              {["Micro", "Meso", "Static Macro", "Travel Demand"].map((name) => (
                <Option key={name}>
                  <Check type="checkbox" defaultChecked />
                  <Tick width="26" height="26" viewBox="0 0 26 26" fill="none" stroke="#fff" strokeWidth="1.4">
                    <path d="M7 13.5 11 17.5 19 9" />
                  </Tick>
                  <OptionText>{name}</OptionText>
                </Option>
              ))}
            </Options>
          </Group>

          <Split $columns="minmax(0, 19fr) minmax(0, 5fr)">
            <Group>
              <Legend>Coordinate System</Legend>
              <FieldRow>
                <FieldLabel htmlFor="epsg">WKT/EPSG:</FieldLabel>
                <TextField id="epsg" defaultValue="EPSG:32601" />
                <Button type="button">From UTM</Button>
              </FieldRow>
            </Group>
            <Group>
              <Legend>Rule of the Road</Legend>
              <RuleRow>
                <Select label="Rule of the Road">Right</Select>
              </RuleRow>
            </Group>
          </Split>

          <Group>
            <Legend>Map</Legend>
            <MapStack>
              <Select label="Map">Do Nothing</Select>
              <MapView>
                <WorldMap />
                <MapControls>
                  <MapButton type="button" aria-label="Pan up" $radius="18px 18px 0 0">
                    <Arrow d="M18 7 29 27H7Z" />
                  </MapButton>
                  <PanRow>
                    <MapButton type="button" aria-label="Pan left" $radius="18px 0 0 18px">
                      <Arrow d="M7 18 27 7V29Z" />
                    </MapButton>
                    <MapButton type="button" aria-label="Pan right" $radius="0 18px 18px 0">
                      <Arrow d="M29 18 9 7V29Z" />
                    </MapButton>
                  </PanRow>
                  <MapButton type="button" aria-label="Pan down" $radius="0 0 18px 18px">
                    <Arrow d="M18 29 29 9H7Z" />
                  </MapButton>
                  <MapButton type="button" aria-label="Zoom in" $spaced $radius="18px 18px 0 0">
                    <Arrow d="M16 10H20V18H28V22H20V30H16V22H8V18H16Z" />
                  </MapButton>
                  <ZoomTrack type="range" aria-label="Zoom level" />
                </MapControls>
                <Attribution>
                  © <MapLink href="#osm">OpenStreetMap</MapLink> contributors
                </Attribution>
              </MapView>
            </MapStack>
          </Group>

          <Footer>
            <Button type="button">Help</Button>
            <FooterGroup>
              <Button type="submit" $primary>OK</Button>
              <Button type="button">Cancel</Button>
            </FooterGroup>
          </Footer>
        </Body>
      </Dialog>
    </Page>
  );
}
